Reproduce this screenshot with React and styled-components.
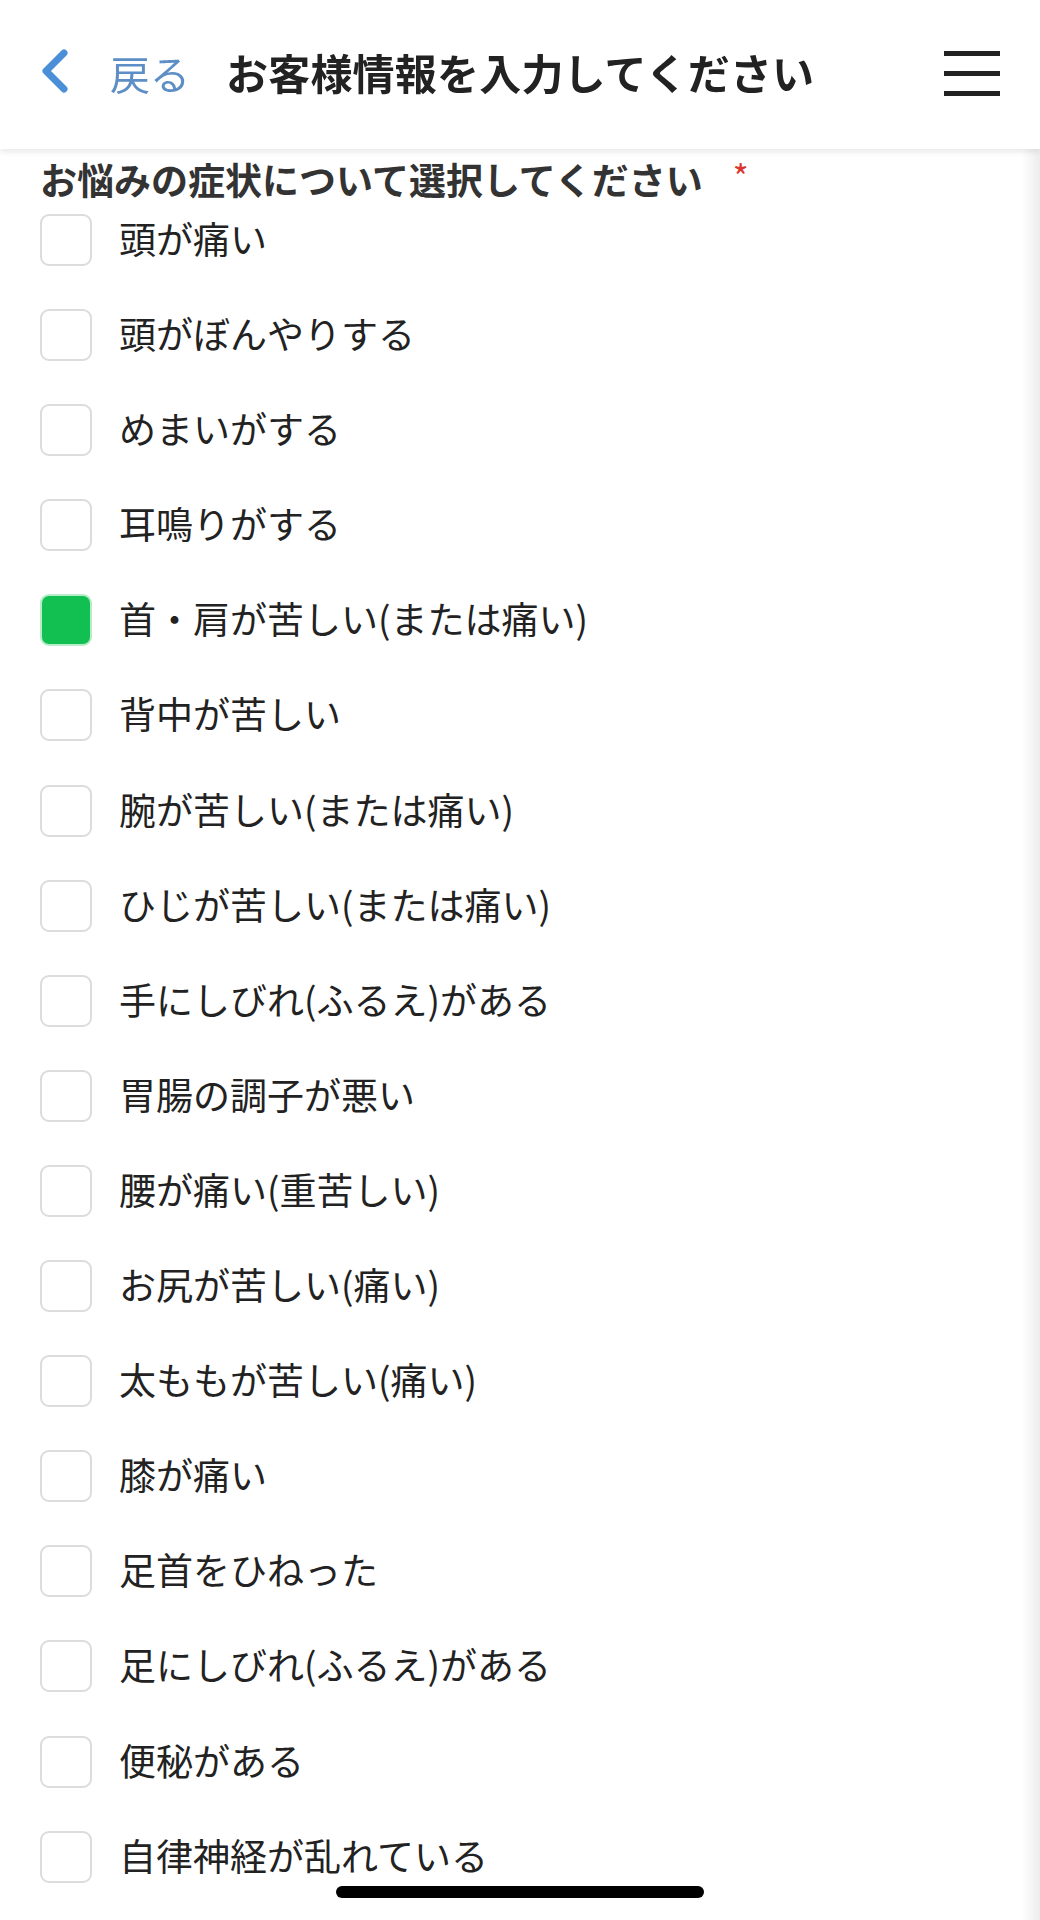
import React, { useState } from "react";
import styled, { createGlobalStyle } from "styled-components";

const GlobalStyle = createGlobalStyle`
  html, body {
    margin: 0;
    padding: 0;
    background: #ffffff;
  }
  body {
    font-family: "Noto Sans CJK JP", "Noto Sans", sans-serif;
    color: #222;
    overflow: hidden;
  }
  body::after {
    content: "";
    position: fixed;
    top: 0;
    right: 0;
    width: 18px;
    height: 100vh;
    background: linear-gradient(to right, rgba(0,0,0,0), rgba(0,0,0,0.07));
    pointer-events: none;
  }
`;

const symptoms = [
  "頭が痛い",
  "頭がぼんやりする",
  "めまいがする",
  "耳鳴りがする",
  "首・肩が苦しい(または痛い)",
  "背中が苦しい",
  "腕が苦しい(または痛い)",
  "ひじが苦しい(または痛い)",
  "手にしびれ(ふるえ)がある",
  "胃腸の調子が悪い",
  "腰が痛い(重苦しい)",
  "お尻が苦しい(痛い)",
  "太ももが苦しい(痛い)",
  "膝が痛い",
  "足首をひねった",
  "足にしびれ(ふるえ)がある",
  "便秘がある",
  "自律神経が乱れている",
];

function App() {
  const [checked, setChecked] = useState({ 4: true });

  const toggle = (i) => {
    setChecked((prev) => ({ ...prev, [i]: !prev[i] }));
  };

  return (
    <Page>
      <GlobalStyle />
      <Header>
        <BackButton>
          <svg width="30" height="46" viewBox="0 0 30 46">
            <polyline
              points="24,5 6,23 24,41"
              fill="none"
              stroke="#4a8fd8"
              strokeWidth="7"
              strokeLinecap="round"
              strokeLinejoin="round"
            />
          </svg>
          <BackText>戻る</BackText>
        </BackButton>
        <Title>お客様情報を入力してください</Title>
        <Menu>
          <span />
          <span />
          <span />
        </Menu>
      </Header>

      <Content>
        <Label>
          お悩みの症状について選択してください
          <Required>*</Required>
        </Label>
        <List>
          {symptoms.map((text, i) => (
            <Row key={text} onClick={() => toggle(i)}>
              <Box $checked={!!checked[i]} />
              <RowText>{text}</RowText>
            </Row>
          ))}
        </List>
      </Content>

      <HomeIndicator />
    </Page>
  );
}

export default App;

const Page = styled.div`
  width: 1040px;
  min-height: 1920px;
  position: relative;
  background: #fff;
`;

const Header = styled.header`
  height: 149px;
  display: flex;
  align-items: center;
  padding: 0 40px 8px 40px;
  box-sizing: border-box;
  background: #fff;
  box-shadow: 0 3px 6px rgba(0, 0, 0, 0.09);
  position: relative;
  z-index: 1;
`;

const BackButton = styled.div`
  display: flex;
  align-items: center;
  gap: 40px;
  margin-top: 0;
`;

const BackText = styled.span`
  font-size: 40px;
  color: #5d8fc6;
  margin-top: 4px;
`;

const Title = styled.h1`
  margin: 2px 0 0 36px;
  font-size: 42px;
  font-weight: 700;
  color: #222;
  letter-spacing: 0.2px;
  flex: 1;
`;

const Menu = styled.div`
  width: 56px;
  display: flex;
  flex-direction: column;
  gap: 15px;
  margin-top: 6px;

  span {
    display: block;
    height: 5px;
    background: #222;
  }
`;

const Content = styled.main`
  padding: 8px 0 0 40px;
`;

const Label = styled.div`
  font-size: 37px;
  font-weight: 700;
  color: #333;
  line-height: 44px;
  display: flex;
  align-items: flex-start;
`;

const Required = styled.span`
  color: #d9362f;
  font-size: 34px;
  font-weight: 400;
  line-height: 34px;
  margin-left: 30px;
  margin-top: 2px;
`;

const List = styled.div`
  display: flex;
  flex-direction: column;
  gap: 43.1px;
  margin-top: 13px;
`;

const Row = styled.label`
  display: flex;
  align-items: center;
  height: 52px;
  cursor: pointer;
`;

const Box = styled.span`
  width: 52px;
  height: 52px;
  box-sizing: border-box;
  border-radius: 9px;
  flex-shrink: 0;
  border: 2px solid ${(p) => (p.$checked ? "#b8ecc8" : "#dcdcdc")};
  background: ${(p) => (p.$checked ? "#12c052" : "#fff")};
`;

const RowText = styled.span`
  margin-left: 27px;
  margin-top: -4px;
  font-size: 37px;
  color: #222;
  line-height: 52px;
`;

const HomeIndicator = styled.div`
  position: fixed;
  left: 336px;
  top: 1886px;
  width: 368px;
  height: 12px;
  border-radius: 6px;
  background: #000;
`;
